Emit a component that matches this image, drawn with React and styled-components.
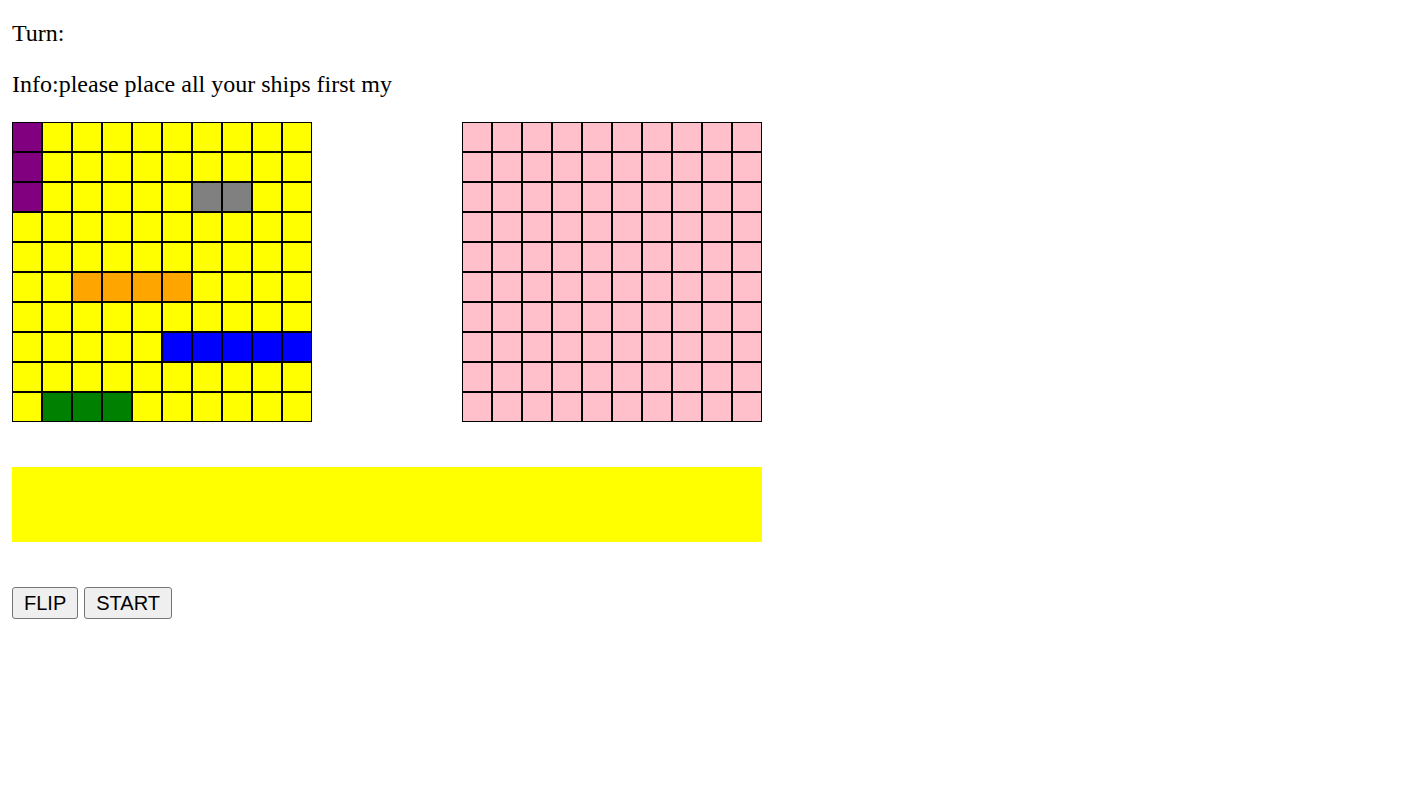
import React from 'react';
import styled, { createGlobalStyle } from 'styled-components';

const GlobalStyle = createGlobalStyle`
    body {
        margin: 0;
        background: #ffffff;
        font-family: "Liberation Serif", "Times New Roman", serif;
        font-size: 24px;
        color: #000000;
    }
`;

const Page = styled.div`
    padding: 20px 12px 0 12px;
`;

const InfoText = styled.p`
    margin: 0 0 24px 0;
    line-height: normal;
`;

const BoardsRow = styled.div`
    display: flex;
    gap: 150px;
`;

const Board = styled.div`
    display: grid;
    grid-template-columns: repeat(10, 30px);
    grid-auto-rows: 30px;
    width: 300px;
`;

const Cell = styled.div`
    box-sizing: border-box;
    border: 1px solid #000000;
    background: ${(props) => props.color};
`;

const ShipDock = styled.div`
    width: 750px;
    height: 75px;
    margin-top: 45px;
    background: #ffff00;
`;

const Controls = styled.div`
    display: flex;
    gap: 6px;
    margin-top: 45px;
`;

const Button = styled.button`
    box-sizing: border-box;
    height: 32px;
    padding: 0 11px;
    font-family: "Liberation Sans", Arial, sans-serif;
    font-size: 20px;
    color: #000000;
    background: #efefef;
    border: 1px solid #767676;
    border-radius: 3px;
`;

// ship cells on the player board: [row, col]
const ships = [
    { color: '#800080', cells: [[0, 0], [1, 0], [2, 0]] },
    { color: '#808080', cells: [[2, 6], [2, 7]] },
    { color: '#ffa500', cells: [[5, 2], [5, 3], [5, 4], [5, 5]] },
    { color: '#0000ff', cells: [[7, 5], [7, 6], [7, 7], [7, 8], [7, 9]] },
    { color: '#008000', cells: [[9, 1], [9, 2], [9, 3]] },
];

const cellColor = (row, col) => {
    for (const ship of ships) {
        if (ship.cells.some(([r, c]) => r === row && c === col)) return ship.color;
    }
    return '#ffff00';
};

const indexes = Array.from({ length: 100 }, (_, i) => i);

export default function App() {
    return (
        <>
            <GlobalStyle />
            <Page>
                <InfoText>Turn:</InfoText>
                <InfoText>Info:please place all your ships first my</InfoText>
                <BoardsRow>
                    <Board>
                        {indexes.map((i) => (
                            <Cell key={i} color={cellColor(Math.floor(i / 10), i % 10)} />
                        ))}
                    </Board>
                    <Board>
                        {indexes.map((i) => (
                            <Cell key={i} color="#ffc0cb" />
                        ))}
                    </Board>
                </BoardsRow>
                <ShipDock />
                <Controls>
                    <Button>FLIP</Button>
                    <Button>START</Button>
                </Controls>
            </Page>
        </>
    );
}
